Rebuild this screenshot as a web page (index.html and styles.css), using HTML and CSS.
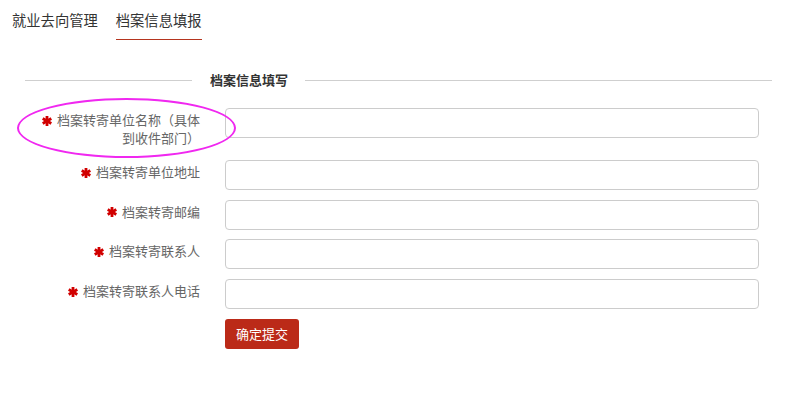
FILE: index.html
```html
<!DOCTYPE html>
<html lang="zh-CN">
<head>
<meta charset="utf-8">
<title>档案信息填报</title>
<link rel="stylesheet" href="styles.css">
</head>
<body>
<nav class="tabs">
  <a class="tab">就业去向管理</a>
  <a class="tab active">档案信息填报</a>
</nav>
<div class="legend">
  <span class="legend-line legend-left"></span>
  <span class="legend-text">档案信息填写</span>
  <span class="legend-line legend-right"></span>
</div>
<form class="form">
  <div class="row row-first">
    <label class="label"><svg class="star" viewBox="0 0 10 10"><g stroke="#d10000" stroke-width="2.8"><line x1="5" y1="0" x2="5" y2="10"/><line x1="0.7" y1="2.5" x2="9.3" y2="7.5"/><line x1="0.7" y1="7.5" x2="9.3" y2="2.5"/></g></svg>档案转寄单位名称（具体到收件部门）</label>
    <input class="input" type="text">
    <span class="mark"></span>
  </div>
  <div class="row">
    <label class="label"><svg class="star" viewBox="0 0 10 10"><g stroke="#d10000" stroke-width="2.8"><line x1="5" y1="0" x2="5" y2="10"/><line x1="0.7" y1="2.5" x2="9.3" y2="7.5"/><line x1="0.7" y1="7.5" x2="9.3" y2="2.5"/></g></svg>档案转寄单位地址</label>
    <input class="input" type="text">
  </div>
  <div class="row">
    <label class="label"><svg class="star" viewBox="0 0 10 10"><g stroke="#d10000" stroke-width="2.8"><line x1="5" y1="0" x2="5" y2="10"/><line x1="0.7" y1="2.5" x2="9.3" y2="7.5"/><line x1="0.7" y1="7.5" x2="9.3" y2="2.5"/></g></svg>档案转寄邮编</label>
    <input class="input" type="text">
  </div>
  <div class="row">
    <label class="label"><svg class="star" viewBox="0 0 10 10"><g stroke="#d10000" stroke-width="2.8"><line x1="5" y1="0" x2="5" y2="10"/><line x1="0.7" y1="2.5" x2="9.3" y2="7.5"/><line x1="0.7" y1="7.5" x2="9.3" y2="2.5"/></g></svg>档案转寄联系人</label>
    <input class="input" type="text">
  </div>
  <div class="row">
    <label class="label"><svg class="star" viewBox="0 0 10 10"><g stroke="#d10000" stroke-width="2.8"><line x1="5" y1="0" x2="5" y2="10"/><line x1="0.7" y1="2.5" x2="9.3" y2="7.5"/><line x1="0.7" y1="7.5" x2="9.3" y2="2.5"/></g></svg>档案转寄联系人电话</label>
    <input class="input" type="text">
  </div>
  <div class="row">
    <span class="label"></span>
    <button class="submit" type="button">确定提交</button>
  </div>
</form>
</body>
</html>
```
FILE: styles.css
```css
* { box-sizing: border-box; }
html, body { margin: 0; padding: 0; background: #fff; }
body {
  font-family: "Noto Sans CJK SC", "Noto Sans", sans-serif;
  color: #333;
  width: 800px;
}
.tabs {
  display: flex;
  gap: 18px;
  padding-left: 12px;
}
.tab {
  font-size: 14.3px;
  line-height: 20px;
  padding: 10px 0 9px;
  color: #333;
  border-bottom: 1px solid transparent;
}
.tab.active { border-bottom-color: #b5351f; }

.legend {
  display: flex;
  align-items: center;
  margin: 30px 28px 0 25px;
  height: 20px;
}
.legend-line { height: 1px; background: #cfcfcf; }
.legend-left { width: 167px; }
.legend-right { flex: 1; }
.legend-text {
  font-size: 13px;
  font-weight: bold;
  line-height: 20px;
  padding: 0 17px 0 18px;
  color: #333;
}

.form { margin-top: 18px; }
.row {
  position: relative;
  display: flex;
  align-items: flex-start;
  margin-bottom: 9.7px;
}
.row-first { margin-bottom: 10px; }
.label {
  width: 200px;
  padding: 3px 0 3px 35px;
  text-align: right;
  font-size: 13px;
  line-height: 18px;
  color: #666;
  flex: none;
}
.star {
  width: 10px;
  height: 10px;
  margin-right: 5px;
  vertical-align: -0.5px;
}
.input {
  margin-left: 25px;
  width: 534px;
  height: 30px;
  border: 1px solid #cccccc;
  border-radius: 4px;
  background: #fff;
  font-size: 13px;
}
.submit {
  margin-left: 25px;
  width: 74px;
  height: 30px;
  border: none;
  border-radius: 3px;
  background: #bb2a18;
  color: #fff;
  font-family: "Noto Sans CJK SC", sans-serif;
  font-size: 13px;
  padding: 0;
}
.mark {
  position: absolute;
  left: 17px;
  top: -10px;
  width: 219px;
  height: 60px;
  border: 2.5px solid #f028f0;
  border-radius: 50%;
  pointer-events: none;
}
```
